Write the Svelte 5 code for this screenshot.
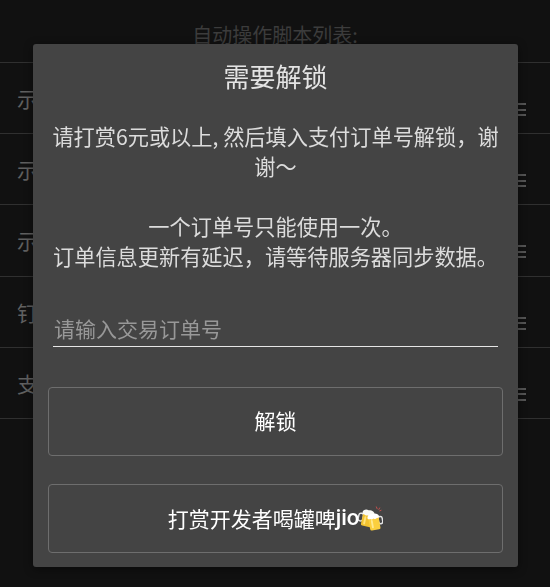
<script>
  const rows = ['示例脚本一', '示例脚本二', '示例脚本三', '钉钉打卡', '支付宝签到'];
</script>

<div class="page">
  <h1 class="list-title">自动操作脚本列表:</h1>
  <ul class="list">
    {#each rows as row}
      <li class="row">
        <span class="row-name">{row}</span>
        <span class="handle" aria-hidden="true"><i></i><i></i><i></i></span>
      </li>
    {/each}
  </ul>
</div>

<div class="overlay">
  <div class="dialog">
    <h2 class="dialog-title">需要解锁</h2>
    <div class="message">
      <p>请打赏6元或以上, 然后填入支付订单号解锁，谢谢～</p>
      <p class="second">一个订单号只能使用一次。<br />订单信息更新有延迟，请等待服务器同步数据。</p>
    </div>
    <input class="field" type="text" placeholder="请输入交易订单号" />
    <button class="action first">解锁</button>
    <button class="action">打赏开发者喝罐啤<span class="latin">jio</span><svg class="beers" viewBox="0 0 24 24" width="25" height="25" aria-hidden="true">
        <path d="M17.500 0.500 18.500 3M21 1.500 19.800 3.600M22.500 4l-2 .8" stroke="#d9534f" stroke-width="0.800" fill="none"/>
        <g transform="rotate(12 8 12)">
          <rect x="0.300" y="8" width="4.500" height="7.500" rx="2.200" fill="none" stroke="#e4e4e4" stroke-width="1.400"/>
          <rect x="4" y="6" width="10.500" height="13.500" rx="1.500" fill="#f2c230"/>
          <rect x="6" y="10" width="1.800" height="8" rx="0.900" fill="#ffe27a"/>
          <path d="M3.200 7c0-2.600 2.800-4 5.300-3.200 2.600-1 6.500.4 6.500 3 0 1.700-1.700 2-2.600 1.500-.6 1-2.800 1-3.400.2-.9.800-2.800.8-3.500 0C4.300 9 3.200 8.400 3.200 7z" fill="#fafaf5"/>
        </g>
        <g transform="rotate(-10 16 15)">
          <rect x="19.700" y="11" width="4" height="7" rx="2" fill="none" stroke="#e4e4e4" stroke-width="1.400"/>
          <rect x="10.500" y="9.500" width="10" height="13.500" rx="1.500" fill="#fbcf3e"/>
          <rect x="12.500" y="13" width="1.800" height="8" rx="0.900" fill="#ffe98f"/>
          <path d="M9.800 10.500c0-2.400 2.600-3.600 5-3 2.500-.8 6.200.5 6.200 3 0 1.500-1.600 1.800-2.500 1.300-.6.900-2.500.9-3.100.1-.8.700-2.500.700-3.100 0-1.400.3-2.500-.4-2.500-1.400z" fill="#ffffff"/>
        </g>
      </svg></button>
  </div>
</div>

<style>
  :global(body) {
    margin: 0;
    background: #111111;
    font-family: "Noto Sans CJK SC", "Noto Sans", sans-serif;
  }

  .page {
    height: 587px;
    overflow: hidden;
    background: #111111;
    color: #606060;
  }

  .list-title {
    margin: 0;
    height: 62px;
    box-sizing: border-box;
    padding-top: 20px;
    text-align: center;
    font-size: 20px;
    line-height: 30px;
    font-weight: 400;
    color: #3c3c3c;
  }

  .list {
    list-style: none;
    margin: 0;
    padding: 0;
    border-top: 1px solid #303030;
  }

  .row {
    height: 70.200px;
    border-bottom: 1px solid #303030;
    display: flex;
    justify-content: space-between;
    padding: 0 24px 0 17px;
  }

  .row-name {
    margin-top: 20px;
    font-size: 21px;
    line-height: 30px;
  }

  .handle {
    margin-top: 40px;
    width: 16px;
    display: flex;
    flex-direction: column;
    gap: 3.500px;
  }

  .handle i {
    height: 2px;
    background: #555555;
  }

  .overlay {
    position: fixed;
    inset: 0;
    display: flex;
    justify-content: center;
    align-items: flex-start;
    padding: 44px 32px 0 33px;
  }

  .dialog {
    width: 485px;
    height: 523px;
    box-sizing: border-box;
    background: #444444;
    border-radius: 3px;
    padding: 0 15px;
    box-shadow: 0 2px 10px rgba(0, 0, 0, 0.45);
    display: flex;
    flex-direction: column;
    color: #dcdcdc;
  }

  .dialog-title {
    margin: 13px 0 0;
    text-align: center;
    font-size: 26px;
    line-height: 38px;
    font-weight: 400;
    color: #e4e4e4;
  }

  .message {
    margin-top: 26px;
    padding: 0 2px;
    font-size: 21.200px;
    line-height: 30px;
    text-align: center;
  }

  .message p {
    margin: 0;
  }

  .message .second {
    margin-top: 30px;
  }

  .field {
    margin: 40px 5px 0;
    height: 36px;
    box-sizing: border-box;
    padding: 0 1px 1px;
    background: transparent;
    border: 0;
    border-bottom: 1.500px solid #e6e6e6;
    outline: 0;
    color: #dcdcdc;
    font: inherit;
    font-size: 21px;
    line-height: 30px;
  }

  .field::placeholder {
    color: #989898;
    opacity: 1;
  }

  .action {
    margin-top: 28px;
    height: 69px;
    flex: none;
    box-sizing: border-box;
    background: transparent;
    border: 1px solid #6e6e6e;
    border-radius: 4px;
    color: #ffffff;
    font: inherit;
    font-size: 21px;
    display: flex;
    align-items: center;
    justify-content: center;
    padding: 0 0 2px;
  }

  .action.first {
    margin-top: 40px;
    padding-bottom: 3px;
  }

  .latin {
    font-family: Roboto, sans-serif;
    font-weight: 500;
    font-size: 22px;
  }

  .beers {
    margin-left: -1px;
    margin-top: 2px;
  }
</style>
